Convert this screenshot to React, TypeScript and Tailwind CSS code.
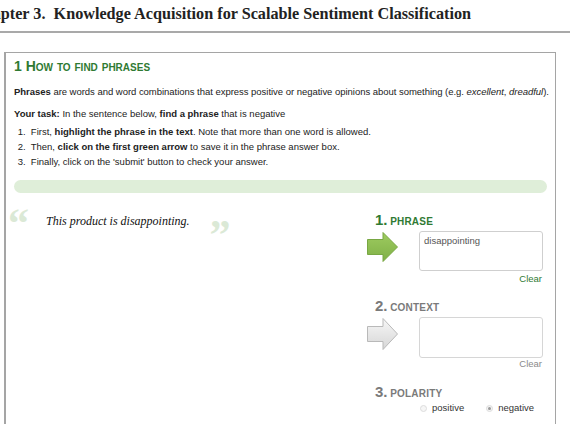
import React from "react";

const sans = "font-['Liberation_Sans',Arial,sans-serif]";

function GreenArrow() {
  return (
    <svg width="31" height="30" viewBox="0 0 31 30">
      <defs>
        <linearGradient id="ga" x1="0" y1="0" x2="0" y2="1">
          <stop offset="0" stopColor="#9ecb60" />
          <stop offset="1" stopColor="#7fb046" />
        </linearGradient>
      </defs>
      <polygon
        points="0.5,7.5 16,7.5 16,0.5 30.5,15 16,29.5 16,22.5 0.5,22.5"
        fill="url(#ga)"
        stroke="#78a743"
        strokeWidth="1"
      />
    </svg>
  );
}

function GrayArrow() {
  return (
    <svg width="31" height="32" viewBox="0 0 31 32">
      <defs>
        <linearGradient id="gg" x1="0" y1="0" x2="0" y2="1">
          <stop offset="0" stopColor="#f7f7f7" />
          <stop offset="1" stopColor="#d6d6d6" />
        </linearGradient>
      </defs>
      <polygon
        points="0.5,8.5 16,8.5 16,0.5 30.5,16 16,31.5 16,23.5 0.5,23.5"
        fill="url(#gg)"
        stroke="#b9b9b9"
        strokeWidth="1"
      />
    </svg>
  );
}

function StepLabel({ n, label, green }: { n: string; label: string; green?: boolean }) {
  return (
    <div
      className={`pl-2 font-bold leading-[15px] ${green ? "text-[#2f7a33]" : "text-[#7a7a7a]"}`}
    >
      <span className="text-[15px]">{n}</span>{" "}
      <span className="text-[10px] tracking-[0.2px]">{label}</span>
    </div>
  );
}

export default function App() {
  return (
    <div className="w-[570px] h-[424px] overflow-hidden bg-white">
      {/* book page header */}
      <div className="h-[33px] border-b-2 border-[#a9a9a9] overflow-hidden">
        <div className="-ml-[28px] pt-[3px] whitespace-pre text-[16.2px] leading-[22px] font-bold text-[#222] font-['Liberation_Serif','Times_New_Roman',serif]">
          Chapter 3.  Knowledge Acquisition for Scalable Sentiment Classification
        </div>
      </div>

      {/* screenshot panel */}
      <div
        className={`mt-[19px] ml-[4px] w-[552px] h-[380px] border border-l-2 border-[#a5a5a5] pl-[8px] pr-[8px] pt-[4px] ${sans} text-[9.5px] text-[#222]`}
      >
        <h2 className="text-[14px] leading-[18px] font-bold text-[#2f7a33] [font-variant:small-caps]">
          1 How to find phrases
        </h2>

        <p className="mt-[10px] leading-[14px] whitespace-nowrap tracking-[-0.03px]">
          <b>Phrases</b> are words and word combinations that express positive or negative
          opinions about something (e.g. <i>excellent</i>, <i>dreadful</i>).
        </p>
        <p className="mt-[8px] leading-[14px]">
          <b>Your task:</b> In the sentence below, <b>find a phrase</b> that is negative
        </p>
        <ol className="mt-[3px] pl-[1px] leading-[15px]">
          <li>
            &nbsp;1.&nbsp; First, <b>highlight the phrase in the text</b>. Note that more than one
            word is allowed.
          </li>
          <li>
            &nbsp;2.&nbsp; Then, <b>click on the first green arrow</b> to save it in the phrase
            answer box.
          </li>
          <li>&nbsp;3.&nbsp; Finally, click on the 'submit' button to check your answer.</li>
        </ol>

        <div className="mt-[11px] h-[13px] rounded-full bg-[#dfeed9]" />

        <div className="flex mt-[20px]">
          {/* sentence */}
          <div className="flex-1 -ml-[6px] flex items-start">
            <span className="w-[16px] -mt-[8px] text-[42px] leading-[36px] font-bold text-[#dbe9d6] font-['Liberation_Serif',serif]">
              &ldquo;
            </span>
            <span className="ml-[22px] mt-[1px] italic text-[12px] leading-[14px] text-[#111] font-['Liberation_Serif',serif]">
              This product is disappointing.
            </span>
            <span className="ml-[20px] mt-[4px] text-[42px] leading-[36px] font-bold text-[#dbe9d6] font-['Liberation_Serif',serif]">
              &rdquo;
            </span>
          </div>

          {/* answer column */}
          <div className="w-[180px] -mt-[1px] flex flex-col">
            <StepLabel n="1." label="PHRASE" green />
            <div className="mt-[2px] flex items-start">
              <div className="mt-[1px]">
                <GreenArrow />
              </div>
              <div className="ml-auto mr-[4px] w-[124px] h-[40px] border border-[#cfcfcf] rounded-[3px] px-[4px] pt-[3px] text-[9.5px] leading-[12px] text-[#555]">
                disappointing
              </div>
            </div>
            <div className="mt-[2px] mr-[5px] text-right leading-[12px] text-[#2f7a33]">Clear</div>

            <div className="mt-[13px]">
              <StepLabel n="2." label="CONTEXT" />
            </div>
            <div className="mt-[2px] flex items-start">
              <div className="mt-[1px]">
                <GrayArrow />
              </div>
              <div className="ml-auto mr-[4px] w-[124px] h-[41px] border border-[#d6d6d6] rounded-[3px]" />
            </div>
            <div className="mr-[5px] text-right leading-[12px] text-[#8a8a8a]">Clear</div>

            <div className="mt-[14px]">
              <StepLabel n="3." label="POLARITY" />
            </div>
            <div className="mt-[1px] flex items-center pl-[53px] text-[#333] leading-[12px]">
              <span className="w-[7px] h-[7px] rounded-full border border-[#ddd] bg-[#f6f6f6]" />
              <span className="ml-[5px]">positive</span>
              <span className="ml-[22px] w-[7px] h-[7px] rounded-full border border-[#ddd] bg-[#f4f4f4] flex items-center justify-center">
                <span className="w-[3px] h-[3px] rounded-full bg-[#999]" />
              </span>
              <span className="ml-[5px]">negative</span>
            </div>
          </div>
        </div>
      </div>
    </div>
  );
}
